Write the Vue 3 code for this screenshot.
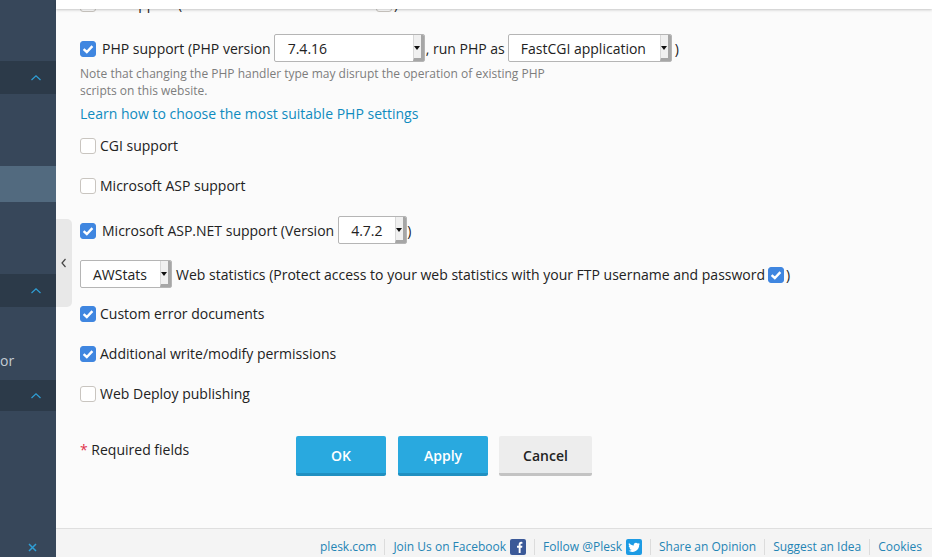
<script setup>
const sideBlocks = [
  { h: 61, kind: 'plain' },
  { h: 33, kind: 'head' },
  { h: 72, kind: 'plain' },
  { h: 36, kind: 'active' },
  { h: 72, kind: 'plain' },
  { h: 33, kind: 'head' },
  { h: 73, kind: 'plain', text: 'or' },
  { h: 31, kind: 'head' },
]

const links = ['Share an Opinion', 'Suggest an Idea', 'Cookies']
</script>

<template>
  <div class="page">
    <aside class="sidebar">
      <div
        v-for="(b, i) in sideBlocks"
        :key="i"
        class="side-block"
        :class="b.kind"
        :style="{ height: b.h + 'px' }"
      >
        <svg v-if="b.kind === 'head'" class="chev" width="12" height="7" viewBox="0 0 12 7">
          <path d="M1.5 6 L6 1.8 L10.5 6" fill="none" stroke="#2f9fd6" stroke-width="1.2" />
        </svg>
        <span v-if="b.text" class="side-text">{{ b.text }}</span>
      </div>
      <div class="side-rest">
        <svg width="9" height="9" viewBox="0 0 9 9">
          <path d="M1 1 L8 8 M8 1 L1 8" stroke="#2f9fd6" stroke-width="1.5" fill="none" />
        </svg>
      </div>
    </aside>

    <div class="main">
      <div class="collapse">
        <svg width="6" height="10" viewBox="0 0 6 10">
          <path d="M4.5 1 L1 5 L4.5 9" fill="none" stroke="#444" stroke-width="1.2" />
        </svg>
      </div>

      <!-- the form is scrolled, so the first row slides under this bar -->
      <div class="topbar"></div>

      <div class="content">
        <div class="row plain clipped">
          <span class="cb"></span>
          <span class="ssi-text">SSI support (Use SSI for *.html and *.htm</span>
          <span class="cb"></span>
          <span class="tight">)</span>
        </div>

        <div class="row php">
          <span class="cb on wide"><svg viewBox="0 0 16 16"><path d="M3.6 8.2 L6.8 11 L12.4 5.2" /></svg></span>
          <span class="sel-label">PHP support (PHP version</span>
          <span class="sel first" style="width: 151px"><span class="sel-val">7.4.16</span><span class="arrow"></span></span>
          <span class="sel-label comma">, run PHP as</span>
          <span class="sel" style="width: 164px"><span class="sel-val">FastCGI application</span><span class="arrow"></span></span>
          <span class="sel-label">)</span>
        </div>
        <p class="note">Note that changing the PHP handler type may disrupt the operation of existing PHP<br>scripts on this website.</p>
        <a class="learn">Learn how to choose the most suitable PHP settings</a>

        <div class="row plain cgi"><span class="cb"></span><span>CGI support</span></div>
        <div class="row plain asp"><span class="cb"></span><span>Microsoft ASP support</span></div>

        <div class="row net">
          <span class="cb on wide"><svg viewBox="0 0 16 16"><path d="M3.6 8.2 L6.8 11 L12.4 5.2" /></svg></span>
          <span class="sel-label">Microsoft ASP.NET support (Version</span>
          <span class="sel" style="width: 69px"><span class="sel-val">4.7.2</span><span class="arrow"></span></span>
          <span class="sel-label net-close">)</span>
        </div>

        <div class="row stats">
          <span class="sel" style="width: 92px"><span class="sel-val">AWStats</span><span class="arrow"></span></span>
          <span class="sel-label">Web statistics (Protect access to your web statistics with your FTP username and password</span>
          <span class="cb on stats-cb"><svg viewBox="0 0 16 16"><path d="M3.6 8.2 L6.8 11 L12.4 5.2" /></svg></span>
          <span class="sel-label stats-close">)</span>
        </div>

        <div class="row plain custom"><span class="cb on"><svg viewBox="0 0 16 16"><path d="M3.6 8.2 L6.8 11 L12.4 5.2" /></svg></span><span>Custom error documents</span></div>
        <div class="row plain perm"><span class="cb on"><svg viewBox="0 0 16 16"><path d="M3.6 8.2 L6.8 11 L12.4 5.2" /></svg></span><span>Additional write/modify permissions</span></div>
        <div class="row plain deploy"><span class="cb"></span><span>Web Deploy publishing</span></div>

        <div class="actions">
          <div class="required"><span class="star">*</span> Required fields</div>
          <button class="btn primary">OK</button>
          <button class="btn primary">Apply</button>
          <button class="btn cancel">Cancel</button>
        </div>
      </div>

      <footer class="footer">
        <a class="f-link">plesk.com</a>
        <a class="f-link">Join Us on Facebook
          <svg class="f-icon" width="16" height="16" viewBox="0 0 16 16">
            <rect width="16" height="16" rx="2" fill="#3b5998" />
            <path d="M8.7 14 V8.8 H7 V6.8 H8.7 V5.4 C8.7 3.7 9.7 2.8 11.2 2.8 L12.4 2.9 V4.7 H11.5 C10.7 4.7 10.6 5.1 10.6 5.6 V6.8 H12.4 L12.1 8.8 H10.6 V14 Z" fill="#fff" />
          </svg>
        </a>
        <a class="f-link">Follow @Plesk
          <svg class="f-icon" width="16" height="16" viewBox="0 0 16 16">
            <rect width="16" height="16" rx="2" fill="#1d9be4" />
            <path d="M13.4 4.6 C13 4.8 12.6 4.9 12.1 5 C12.6 4.7 12.9 4.3 13.1 3.8 C12.6 4.1 12.1 4.3 11.6 4.4 C10.7 3.4 9.1 3.5 8.2 4.5 C7.8 5 7.6 5.7 7.8 6.4 C5.9 6.3 4.2 5.4 3 3.9 C2.4 5 2.7 6.3 3.7 7 C3.3 7 3 6.9 2.7 6.7 C2.7 7.9 3.5 8.9 4.6 9.1 C4.3 9.2 3.9 9.2 3.6 9.2 C3.9 10.1 4.8 10.8 5.8 10.8 C4.8 11.6 3.6 11.9 2.4 11.8 C5.8 13.9 10.2 12.9 12.3 9.5 C13 8.4 13.3 7.1 13.2 5.8 C13.6 5.5 14 5.1 13.4 4.6 Z" fill="#fff" />
          </svg>
        </a>
        <a v-for="l in links" :key="l" class="f-link">{{ l }}</a>
      </footer>
    </div>
  </div>
</template>

<style scoped>
.page {
  display: flex;
  width: 932px;
  height: 557px;
  overflow: hidden;
  font-family: "Open Sans", "Liberation Sans", sans-serif;
  font-size: 14px;
  line-height: 20px;
  color: #222;
}

.sidebar {
  width: 56px;
  flex: none;
  display: flex;
  flex-direction: column;
  background: #37475a;
}

.side-block {
  flex: none;
  position: relative;
  display: flex;
  align-items: center;
  justify-content: flex-end;
}

.side-block.head {
  background: #2c3a49;
  padding-right: 14px;
}

.side-block.active {
  background: #526a7f;
}

.side-text {
  position: absolute;
  left: 0;
  top: 44px;
  color: #c4ccd4;
}

.chev {
  display: block;
}

.side-rest {
  flex: 1;
  display: flex;
  align-items: flex-end;
  padding: 0 0 5px 28px;
}

.main {
  flex: 1;
  min-width: 0;
  display: flex;
  flex-direction: column;
  position: relative;
  background: #fbfbfb;
}

.collapse {
  position: absolute;
  left: 0;
  top: 219px;
  width: 16px;
  height: 88px;
  background: #e8e8e8;
  border-radius: 0 5px 5px 0;
  display: flex;
  align-items: center;
  justify-content: center;
  z-index: 1;
}

.topbar {
  position: absolute;
  left: 0;
  right: 0;
  top: 0;
  height: 9px;
  background: #fff;
  box-shadow: 0 1px 3px rgba(0, 0, 0, 0.22);
  z-index: 2;
}

.content {
  flex: 1;
  min-height: 0;
  overflow: hidden;
  padding-left: 24px;
}

.row {
  display: flex;
  align-items: center;
  white-space: nowrap;
}

.clipped {
  margin-top: -6px;
}

.ssi-text {
  width: 272px;
}

.row.php {
  height: 28px;
  gap: 3px;
  margin-top: 20px;
}

.row.plain {
  gap: 4px;
}

.sel-label {
  position: relative;
  top: 1px;
}

.comma {
  margin-left: -2px;
}

.note {
  margin: 3px 0 0;
  font-size: 12px;
  line-height: 17px;
  color: #7d7d7d;
}

.learn {
  display: block;
  margin-top: 5px;
  color: #0f8bbf;
  height: 20px;
}

.cgi { margin-top: 12px; }
.asp { margin-top: 20px; }
.net { margin-top: 20px; height: 28px; gap: 4px; }
.stats { margin-top: 16px; height: 28px; gap: 4px; }
.custom { margin-top: 16px; }
.perm { margin-top: 20px; }
.deploy { margin-top: 20px; }

.tight {
  margin-left: -2px;
}

.net-close {
  margin-left: -4px;
}

.stats-close {
  margin-left: -2px;
}

.cb {
  width: 16px;
  height: 16px;
  flex: none;
  box-sizing: border-box;
  border: 1px solid #c9c5c0;
  border-radius: 3px;
  background: #fff;
  display: inline-block;
}

.cb.wide {
  margin: 2px 3px 0 0;
}

.net .cb.wide {
  margin-right: 2px;
}

.stats-cb {
  margin-left: -1px;
  margin-top: 2px;
}

.cb.on {
  background: #3f86e0;
  border-color: #3f86e0;
}

.cb svg {
  display: block;
  width: 16px;
  height: 16px;
  margin: -1px;
}

.cb svg path {
  fill: none;
  stroke: #fff;
  stroke-width: 2.4;
}

.sel {
  box-sizing: border-box;
  height: 28px;
  flex: none;
  display: flex;
  align-items: center;
  justify-content: space-between;
  background: #fff;
  border: 1px solid #b5b5b5;
  border-radius: 2px;
  overflow: hidden;
}

.sel-val {
  padding-left: 12px;
  position: relative;
  top: 1px;
}

.sel.first .sel-val {
  padding-left: 13px;
}

.arrow {
  width: 11px;
  height: 26px;
  flex: none;
  box-sizing: border-box;
  position: relative;
  background: #f0f0f0;
  border-left: 1px solid #d8d8d8;
  border-right: 3px solid #a6a6a6;
  border-bottom: 3px solid #a6a6a6;
}

.arrow::after {
  content: "";
  position: absolute;
  left: 0;
  top: 11px;
  border-left: 3.5px solid transparent;
  border-right: 3.5px solid transparent;
  border-top: 4px solid #111;
}

.actions {
  display: flex;
  align-items: flex-start;
  margin-top: 32px;
}

.required {
  width: 216px;
  padding-top: 4px;
}

.star {
  color: #e0324b;
}

.btn {
  box-sizing: border-box;
  height: 40px;
  border: none;
  border-radius: 2px;
  font: 600 14px "Open Sans", "Liberation Sans", sans-serif;
  padding: 2px 0 0;
}

.btn.primary {
  width: 90px;
  margin-right: 12px;
  background: #29a9df;
  border-bottom: 3px solid #2090c1;
  color: #fff;
}

.btn.cancel {
  width: 93px;
  margin-left: -1px;
  background: #ededed;
  border-bottom: 3px solid #c3c3c3;
  color: #222;
}

.footer {
  box-sizing: border-box;
  height: 29px;
  flex: none;
  display: flex;
  align-items: center;
  justify-content: flex-end;
  padding: 7px 2px 0 0;
  background: #f4f4f4;
  border-top: 1px solid #dfdfdf;
  font-size: 12px;
}

.f-link {
  display: flex;
  align-items: center;
  gap: 4px;
  color: #2484b4;
  padding: 0 8px;
  border-left: 1px solid #dcdcdc;
  line-height: 16px;
}

.f-link:first-child {
  border-left: none;
}

.f-icon {
  display: block;
}
</style>

<style>
html, body {
  margin: 0;
  overflow: hidden;
}
</style>
